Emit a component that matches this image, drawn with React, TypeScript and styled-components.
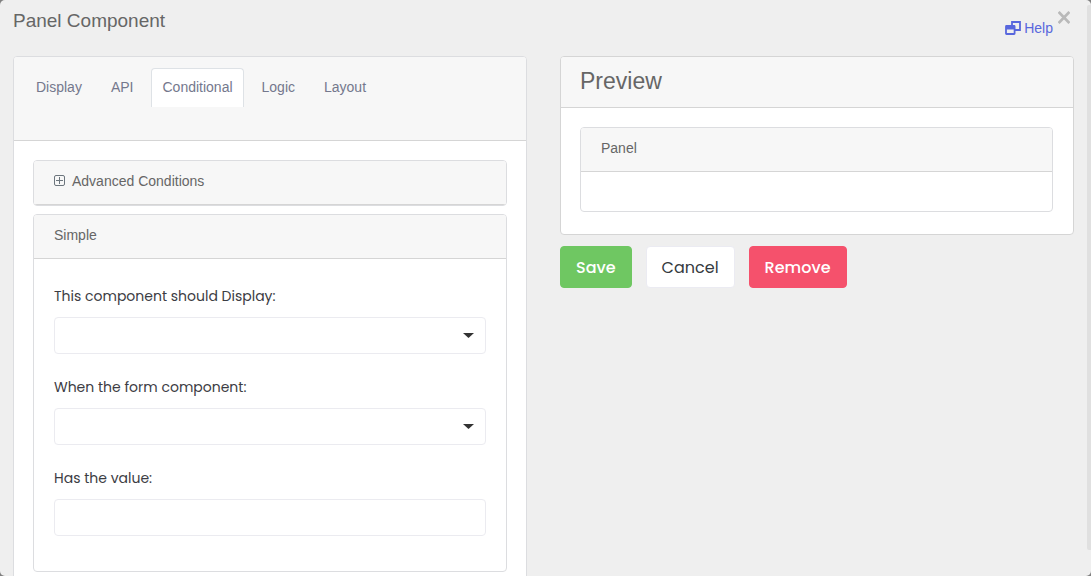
import React from "react";
import styled, { createGlobalStyle } from "styled-components";

const sans = `"Liberation Sans", Arial, sans-serif`;
const geometric = `Poppins, Inter, sans-serif`;

const GlobalStyle = createGlobalStyle`
  *, *::before, *::after { box-sizing: border-box; }
  body {
    margin: 0;
    background: #808080;
    font-family: ${sans};
    font-size: 14px;
    color: #666;
  }
`;

const Dialog = styled.main`
  position: relative;
  height: 100vh;
  overflow: hidden;
  padding: 8px 17px 0 13px;
  border-radius: 5px;
  background: #efefef;
`;

const DialogHeader = styled.header`
  display: flex;
  justify-content: space-between;
  height: 48px;
`;

const Title = styled.h1`
  margin: 0;
  font-size: 19px;
  line-height: 26px;
  font-weight: 400;
`;

const HeaderActions = styled.div`
  display: flex;
  align-items: flex-start;
  gap: 4px;
`;

const HelpLink = styled.a`
  display: flex;
  align-items: center;
  gap: 3px;
  padding-top: 12px;
  line-height: 16px;
  color: #5867dd;
  text-decoration: none;
`;

const CloseButton = styled.button`
  display: flex;
  padding: 3px 4px 3px 1px;
  border: 0;
  background: none;
  color: #b9b9b9;
  cursor: pointer;
`;

const Columns = styled.div`
  display: grid;
  grid-template-columns: 1fr 1fr;
  align-items: start;
  gap: 33px;
`;

const Card = styled.section<{ $tone?: string }>`
  border: 1px solid ${(p) => p.$tone ?? "#dcdde0"};
  border-radius: 4px;
  background: #fff;
  overflow: hidden;
`;

const CardHeader = styled.div<{ $large?: boolean }>`
  display: flex;
  align-items: center;
  height: ${(p) => (p.$large ? 51 : 44)}px;
  padding: ${(p) => (p.$large ? "0 19px 2px" : "0 20px 4px")};
  border-bottom: 1px solid #d5d5d5;
  background: #f7f7f7;
`;

const TabHeader = styled.div`
  height: 84px;
  padding: 11px 11px 0;
  border-bottom: 1px solid #d5d5d5;
  background: #f7f7f7;
`;

const Tabs = styled.nav`
  display: flex;
  gap: 7px;
`;

const Tab = styled.button<{ $active?: boolean }>`
  height: 39px;
  padding: 0 10px 2px;
  border: 1px solid ${(p) => (p.$active ? "#dee2e6" : "transparent")};
  border-bottom: 0;
  border-radius: 4px 4px 0 0;
  background: ${(p) => (p.$active ? "#fff" : "transparent")};
  color: #74788d;
  font: 14px ${sans};
  cursor: pointer;
`;

const CardBody = styled.div`
  display: flex;
  flex-direction: column;
  gap: 8px;
  padding: 19px;
`;

const HeadingLarge = styled.h2`
  margin: 0;
  font-size: 23px;
  line-height: 28px;
  font-weight: 400;
`;

const Heading = styled.h3`
  margin: 0;
  font-size: 14px;
  line-height: 18px;
  font-weight: 400;
`;

const ExpandButton = styled.button`
  display: flex;
  align-items: center;
  gap: 7px;
  padding: 0;
  border: 0;
  background: none;
  color: inherit;
  font: 14px/18px ${sans};
  cursor: pointer;
`;

const Form = styled.form`
  display: flex;
  flex-direction: column;
  gap: 23px;
  padding: 27px 20px 35px;
`;

const Field = styled.div`
  display: flex;
  flex-direction: column;
  gap: 11px;
`;

const Label = styled.label`
  font: 400 14px/20px ${geometric};
  color: #3c3c43;
`;

const control = `
  display: block;
  width: 100%;
  height: 37px;
  padding: 0 12px;
  border: 1px solid #ebebf0;
  border-radius: 4px;
  background: #fff;
  font: 14px ${sans};
  color: #48484e;
`;

const Input = styled.input`
  ${control}
`;

const Select = styled.select`
  ${control}
  appearance: none;
`;

const SelectBox = styled.div`
  position: relative;
`;

const Caret = styled.svg`
  position: absolute;
  right: 12px;
  top: 16px;
  pointer-events: none;
`;

const PreviewBody = styled.div`
  padding: 19px 20px 22px 19px;
`;

const EmptyPanel = styled.div`
  height: 39px;
`;

const Buttons = styled.div`
  display: flex;
  gap: 14px;
  margin-top: 11px;
`;

const Button = styled.button<{ $bg: string; $fg?: string; $edge?: string; $weight?: number }>`
  height: 42px;
  padding: 0 15px;
  border: 1px solid ${(p) => p.$edge ?? p.$bg};
  border-radius: 4px;
  background: ${(p) => p.$bg};
  color: ${(p) => p.$fg ?? "#fff"};
  font: ${(p) => p.$weight ?? 500} 16px ${geometric};
  cursor: pointer;
`;

const ScrollThumb = styled.div`
  position: absolute;
  top: 5px;
  right: 0;
  width: 4px;
  height: 545px;
  border-radius: 2px 0 0 2px;
  background: #e0e0e0;
`;

const tabs = ["Display", "API", "Conditional", "Logic", "Layout"];

function SelectField({ id, label }: { id: string; label: string }) {
  return (
    <Field>
      <Label htmlFor={id}>{label}</Label>
      <SelectBox>
        <Select id={id} defaultValue="">
          <option value="" />
        </Select>
        <Caret width="11" height="5" viewBox="0 0 11 5" aria-hidden="true">
          <path d="M0 0h11L5.5 5z" fill="#333" />
        </Caret>
      </SelectBox>
    </Field>
  );
}

export default function App() {
  return (
    <>
      <GlobalStyle />
      <Dialog>
        <DialogHeader>
          <Title>Panel Component</Title>
          <HeaderActions>
            <HelpLink href="#help">
              <svg width="16" height="14" viewBox="0 0 16 14" fill="none" stroke="currentColor" strokeWidth="1.8" aria-hidden="true">
                <path d="M7 5V1h8v8h-5" />
                <rect x="1" y="5" width="8.6" height="8" rx="0.5" />
                <path d="M1 6.5h8.6" strokeWidth="4" />
              </svg>
              Help
            </HelpLink>
            <CloseButton type="button" aria-label="Close">
              <svg width="12" height="13" viewBox="0 0 12 13" stroke="currentColor" strokeWidth="2.7" aria-hidden="true">
                <path d="M0.6 0.9l10.8 11.2M11.4 0.9L0.6 12.1" />
              </svg>
            </CloseButton>
          </HeaderActions>
        </DialogHeader>
        <Columns>
          <Card>
            <TabHeader>
              <Tabs>
                {tabs.map((name) => (
                  <Tab key={name} type="button" $active={name === "Conditional"}>
                    {name}
                  </Tab>
                ))}
              </Tabs>
            </TabHeader>
            <CardBody>
              <Card>
                <CardHeader>
                  <ExpandButton type="button">
                    <svg width="11" height="11" viewBox="0 0 11 11" fill="none" stroke="#6c757d" aria-hidden="true">
                      <rect x="0.5" y="0.5" width="10" height="10" rx="1.5" />
                      <path d="M5.5 2v7M2 5.5h7" />
                    </svg>
                    Advanced Conditions
                  </ExpandButton>
                </CardHeader>
              </Card>
              <Card>
                <CardHeader>
                  <Heading>Simple</Heading>
                </CardHeader>
                <Form>
                  <SelectField id="show" label="This component should Display:" />
                  <SelectField id="when" label="When the form component:" />
                  <Field>
                    <Label htmlFor="value">Has the value:</Label>
                    <Input id="value" type="text" />
                  </Field>
                </Form>
              </Card>
            </CardBody>
          </Card>
          <div>
            <Card $tone="#d5d5d5">
              <CardHeader $large>
                <HeadingLarge>Preview</HeadingLarge>
              </CardHeader>
              <PreviewBody>
                <Card>
                  <CardHeader>
                    <Heading>Panel</Heading>
                  </CardHeader>
                  <EmptyPanel />
                </Card>
              </PreviewBody>
            </Card>
            <Buttons>
              <Button type="button" $bg="#6fc762">Save</Button>
              <Button type="button" $bg="#fff" $fg="#343a40" $edge="#ebebf2" $weight={400}>Cancel</Button>
              <Button type="button" $bg="#f5516c">Remove</Button>
            </Buttons>
          </div>
        </Columns>
        <ScrollThumb />
      </Dialog>
    </>
  );
}
